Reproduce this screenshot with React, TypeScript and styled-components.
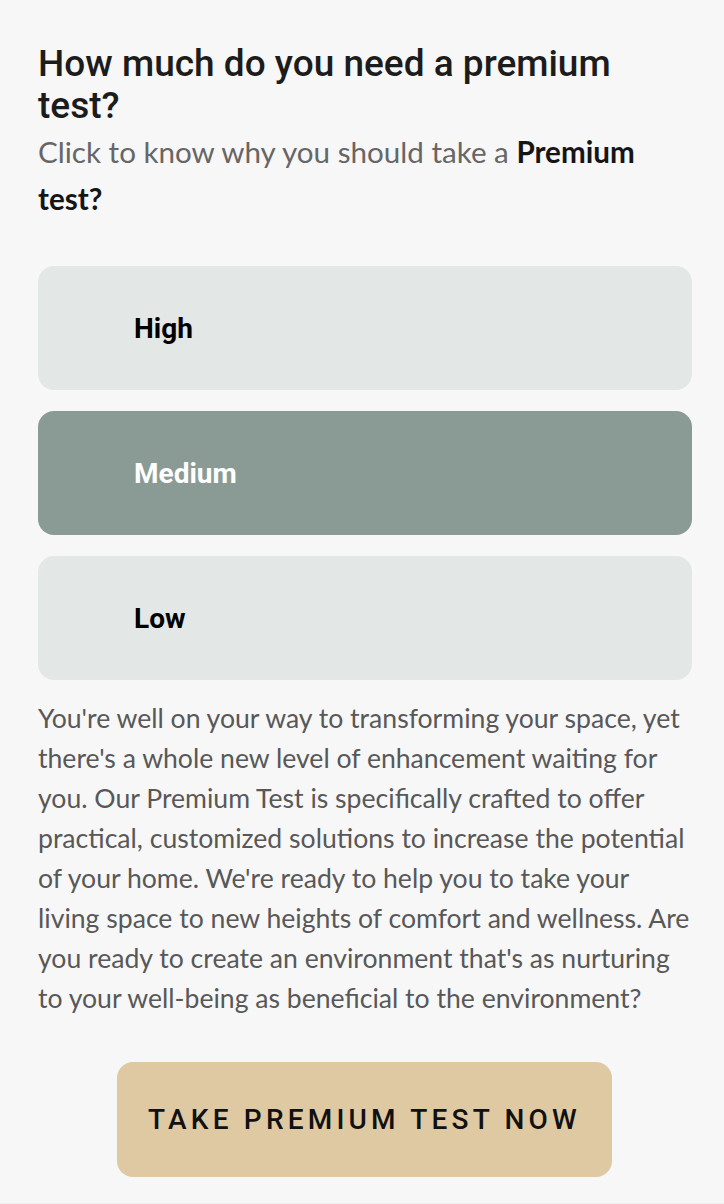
import React from "react";
import styled, { createGlobalStyle } from "styled-components";

const Global = createGlobalStyle`
  html, body { margin: 0; padding: 0; background: #f7f7f7; }
  * { box-sizing: border-box; }
`;

const Page = styled.div`
  min-height: 1204px;
  background: #f7f7f7;
  padding: 43px 32px 26px 38px;
  display: flex;
  flex-direction: column;
  border-bottom: 12px solid #eeeeee;
`;

const Title = styled.h1`
  margin: 0;
  width: 654px;
  font-family: Roboto, "Liberation Sans", sans-serif;
  font-weight: 500;
  font-size: 37px;
  line-height: 42px;
  color: #1c1c1c;
`;

const Subtitle = styled.p`
  margin: 1px 0 0;
  width: 654px;
  font-family: Lato, "Noto Sans", sans-serif;
  font-size: 29.6px;
  line-height: 47px;
  color: #666666;
`;

const Strong = styled.b`
  color: #151515;
  font-weight: 700;
`;

const Options = styled.div`
  margin-top: 44px;
  display: flex;
  flex-direction: column;
  gap: 21px;
  width: 654px;
`;

const Option = styled.button<{ $active?: boolean }>`
  height: 124px;
  border: none;
  border-radius: 16px;
  background: ${(p) => (p.$active ? "#899b94" : "#e3e7e6")};
  color: ${(p) => (p.$active ? "#ffffff" : "#000000")};
  font-family: Roboto, "Liberation Sans", sans-serif;
  font-weight: 700;
  font-size: 28px;
  text-align: left;
  padding: 0 0 0 96px;
  cursor: pointer;
`;

const Body = styled.p`
  margin: 18px 0 0;
  width: 654px;
  font-family: Lato, "Noto Sans", sans-serif;
  font-size: 26.6px;
  line-height: 40px;
  color: #585858;
`;

const CTA = styled.button`
  align-self: flex-start;
  margin: 44px 0 0 79px;
  width: 495px;
  height: 115px;
  border: none;
  border-radius: 16px;
  background: #dfc9a2;
  color: #111111;
  font-family: Roboto, "Liberation Sans", sans-serif;
  font-weight: 500;
  font-size: 28px;
  letter-spacing: 4.2px;
  padding: 0;
  cursor: pointer;
`;

export default function App() {
  return (
    <>
      <Global />
      <Page>
        <Title>How much do you need a premium test?</Title>
        <Subtitle>
          Click to know why you should take a <Strong>Premium</Strong> <Strong>test?</Strong>
        </Subtitle>
        <Options>
          <Option>High</Option>
          <Option $active>Medium</Option>
          <Option>Low</Option>
        </Options>
        <Body>
          You're well on your way to transforming your space, yet there's a whole new level of
          enhancement waiting for you. Our Premium Test is specifically crafted to offer practical,
          customized solutions to increase the potential of your home. We're ready to help you to take
          your living space to new heights of comfort and wellness. Are you ready to create an
          environment that's as nurturing to your well-being as beneficial to the environment?
        </Body>
        <CTA>TAKE PREMIUM TEST NOW</CTA>
      </Page>
    </>
  );
}
